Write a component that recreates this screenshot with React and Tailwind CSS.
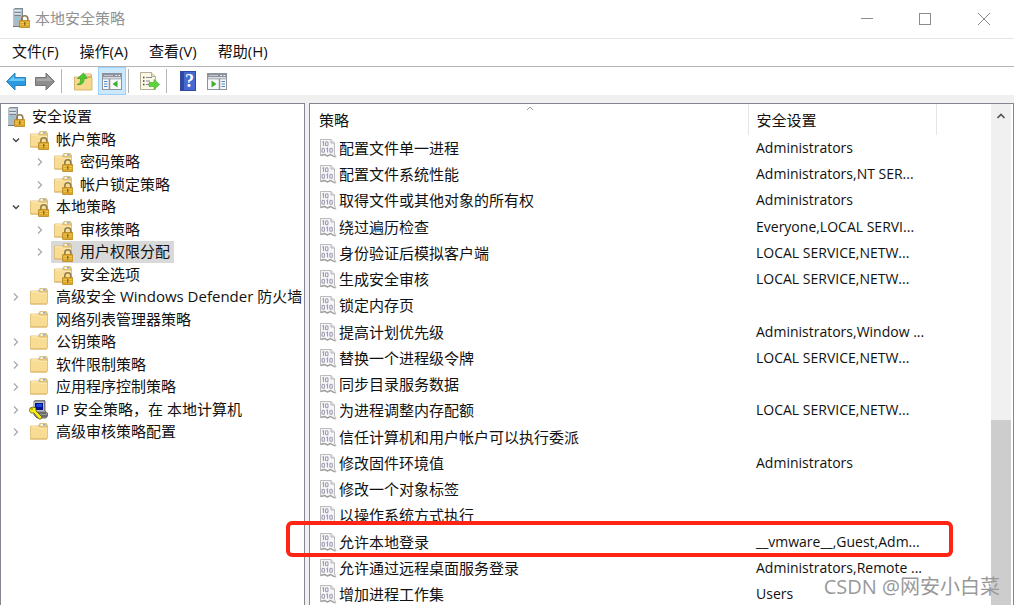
import React, { useState } from 'react';

const treeItems = [
  { id: 'root', label: '安全设置', icon: 'server', level: 0 },
  { id: 'account', label: '帐户策略', icon: 'locked', level: 1, arrow: 'open' },
  { id: 'password', label: '密码策略', icon: 'locked', level: 2, arrow: 'closed' },
  { id: 'lockout', label: '帐户锁定策略', icon: 'locked', level: 2, arrow: 'closed' },
  { id: 'local', label: '本地策略', icon: 'locked', level: 1, arrow: 'open' },
  { id: 'audit', label: '审核策略', icon: 'locked', level: 2, arrow: 'closed' },
  { id: 'rights', label: '用户权限分配', icon: 'locked', level: 2, arrow: 'closed' },
  { id: 'options', label: '安全选项', icon: 'locked', level: 2 },
  { id: 'firewall', label: '高级安全 Windows Defender 防火墙', icon: 'folder', level: 1, arrow: 'closed' },
  { id: 'network', label: '网络列表管理器策略', icon: 'folder', level: 1 },
  { id: 'pki', label: '公钥策略', icon: 'folder', level: 1, arrow: 'closed' },
  { id: 'software', label: '软件限制策略', icon: 'folder', level: 1, arrow: 'closed' },
  { id: 'applocker', label: '应用程序控制策略', icon: 'folder', level: 1, arrow: 'closed' },
  { id: 'ipsec', label: 'IP 安全策略，在 本地计算机', icon: 'computer', level: 1, arrow: 'closed' },
  { id: 'advanced', label: '高级审核策略配置', icon: 'folder', level: 1, arrow: 'closed' },
];

const policies = [
  { name: '配置文件单一进程', setting: 'Administrators' },
  { name: '配置文件系统性能', setting: 'Administrators,NT SER...' },
  { name: '取得文件或其他对象的所有权', setting: 'Administrators' },
  { name: '绕过遍历检查', setting: 'Everyone,LOCAL SERVI...' },
  { name: '身份验证后模拟客户端', setting: 'LOCAL SERVICE,NETW...' },
  { name: '生成安全审核', setting: 'LOCAL SERVICE,NETW...' },
  { name: '锁定内存页', setting: '' },
  { name: '提高计划优先级', setting: 'Administrators,Window ...' },
  { name: '替换一个进程级令牌', setting: 'LOCAL SERVICE,NETW...' },
  { name: '同步目录服务数据', setting: '' },
  { name: '为进程调整内存配额', setting: 'LOCAL SERVICE,NETW...' },
  { name: '信任计算机和用户帐户可以执行委派', setting: '' },
  { name: '修改固件环境值', setting: 'Administrators' },
  { name: '修改一个对象标签', setting: '' },
  { name: '以操作系统方式执行', setting: '' },
  { name: '允许本地登录', setting: '__vmware__,Guest,Adm...' },
  { name: '允许通过远程桌面服务登录', setting: 'Administrators,Remote ...' },
  { name: '增加进程工作集', setting: 'Users' },
];

const menus = ['文件(F)', '操作(A)', '查看(V)', '帮助(H)'];

const indent = { 0: 'pl-1', 1: 'pl-[2px]', 2: 'pl-[26px]' };

const Padlock = () => (
  <g>
    <path d="M11.8 13V10.800a3 3 0 0 1 6 0V13" fill="none" stroke="#8f7c4c" strokeWidth="1.6" />
    <rect x="9.500" y="12.500" width="10.500" height="7" rx="0.5" fill="#dba92c" stroke="#b58422" strokeWidth="0.8" />
    <path d="M10.500 14.500h8.500M10.500 16.500h8.500" stroke="#f1cb58" strokeWidth="0.8" />
    <path d="M14.800 14v3.500" stroke="#80570a" strokeWidth="1.2" />
  </g>
);

const ServerIcon = () => (
  <svg className="w-5 h-5 shrink-0" viewBox="0 0 20 20" aria-hidden="true">
    <path d="M3.500 1l1.500-1h8v17l-1 1H3.500z" fill="#7f8d98" />
    <rect x="3.500" y="1" width="8.500" height="17" fill="#aebbc5" />
    <path d="M4.500 3h6.500M4.500 6h6.500" stroke="#eef4f8" strokeWidth="1.500" />
    <path d="M4.500 4.300h6.500M4.500 7.300h6.500" stroke="#586975" strokeWidth="0.800" />
    <rect x="5" y="10" width="2" height="2" fill="#65d9e8" />
    <path d="M3 18h8v1H3z" fill="#6c7982" />
    <Padlock />
  </svg>
);

const FolderIcon = ({ locked }) => (
  <svg className="w-5 h-5 shrink-0" viewBox="0 0 20 20" aria-hidden="true">
    <path d="M9.500 4l1.300-2.500h6.500l1.200 2V6h-9z" fill="#e8c373" stroke="#cfa960" strokeWidth="0.600" />
    <rect x="11.500" y="2.200" width="5" height="1.500" fill="#fff" />
    <rect x="14" y="2.200" width="2.500" height="1.300" fill="#4fa8e0" />
    <path d="M1.500 4h7.500l1.500 1.300h8v11l-1 .7h-16z" fill="#f8dc93" stroke="#dab970" strokeWidth="0.800" />
    <path d="M2.200 4.900h6.400l1.300 1.300h8" fill="none" stroke="#fdeebf" strokeWidth="1" />
    <path d="M1.500 17h16.500" stroke="#dcb667" strokeWidth="1" />
    {locked && <Padlock />}
  </svg>
);

const ComputerIcon = () => (
  <svg className="w-5 h-5 shrink-0" viewBox="0 0 20 20" aria-hidden="true">
    <path d="M5 1.500L6.500 0H15l1 1v10l2.500 2v3l-1.500 2H8l-3-3z" fill="#969696" stroke="#555" strokeWidth="0.800" />
    <path d="M5 2h10v9H5z" fill="#bcbcbc" />
    <path d="M6 3h8v7H6z" fill="#00108f" />
    <path d="M7.500 4h5.500v3H7.500z" fill="#1646ed" />
    <path d="M9 13h8M10 16h8" stroke="#444" />
    <path d="M1 8l3-1 3 1v3l6 6-1 2h-2l-5-6H2l-1.500-2z" fill="#f8ed15" stroke="#4f4a00" strokeWidth="0.700" />
    <path d="M2 9h2" stroke="#746d00" />
  </svg>
);

const PolicyIcon = () => (
  <svg className="w-[18px] h-5 shrink-0" viewBox="0 0 18 20" aria-hidden="true">
    <path d="M1.500 1.500h10.500l3.500 3.500v11l1.500 3-3.500-1-2-1.500-3 1.500-3-1.500-4 1z" fill="#f6f6f7" stroke="#bcbcbc" />
    <path d="M12 1.500v3.500h3.500" fill="#e4e4e4" stroke="#b5b5b5" />
    <path d="M1.500 17.500l4-1 3 1.500 3-1.500 4.500 2.500" fill="none" stroke="#a2a2a2" strokeWidth="1.400" />
    <g fill="none" stroke="#a09cb8" strokeWidth="1.100">
      <path d="M3.500 4.500l1-.8V8" />
      <rect x="6.500" y="3.800" width="2.500" height="4" rx="1" />
      <rect x="3" y="10.300" width="2.500" height="4" rx="1" />
      <path d="M7.500 11l1-.8v4.300" />
      <rect x="10.800" y="10.300" width="2.500" height="4" rx="1" />
    </g>
  </svg>
);

const TreeIcon = ({ type }) => {
  if (type === 'server') return <ServerIcon />;
  if (type === 'computer') return <ComputerIcon />;
  return <FolderIcon locked={type === 'locked'} />;
};

const Arrow = ({ state }) => (
  <svg className="w-6 h-3 shrink-0" viewBox="0 0 24 12" fill="none" aria-hidden="true">
    {state === 'open' && <path d="M10 4.500l3 3 3-3" stroke="#444" strokeWidth="1.400" />}
    {state === 'closed' && <path d="M11 2.500l3.500 3.500-3.500 3.500" stroke="#a6a6a6" strokeWidth="1.200" />}
  </svg>
);

const ArrowIcon = ({ forward }) => (
  <svg className="w-5 h-5" viewBox="0 0 20 20" aria-hidden="true">
    {forward ? (
      <>
        <path d="M19.500 10.500L11 2v4.500H.500v8H11V19z" fill="#8d8d8d" stroke="#747474" />
        <path d="M1.500 10V7.500H12v-3l5.500 5.500z" fill="#a9a9a9" />
      </>
    ) : (
      <>
        <path d="M.500 10.500L9 2v4.500h10.500v8H9V19z" fill="#2a9be0" stroke="#2f83bd" />
        <path d="M18.500 10V7.500H8v-3L2.500 10z" fill="#68c8f6" />
      </>
    )}
  </svg>
);

const UpFolderIcon = () => (
  <svg className="w-5 h-5" viewBox="0 0 20 20" aria-hidden="true">
    <path d="M11 5l1-2.500h6l1 2V7h-8z" fill="#dbb45b" />
    <rect x="13" y="3.500" width="4.500" height="1.200" fill="#e9f5fd" />
    <path d="M1.500 6h8l1.500.500h8V19H1.500z" fill="#f6d98d" stroke="#cfaa56" strokeWidth="0.800" />
    <path d="M4 13.500c3-.5 4-3 3.500-6H4.500L10.500 2 14 7.500h-3c.5 4-2.500 7-7 6z" fill="#4ccb2e" stroke="#2f9e22" strokeWidth="0.700" />
  </svg>
);

const PaneIcon = ({ right }) => (
  <svg className="w-5 h-5" viewBox="0 0 20 20" aria-hidden="true">
    <rect x="0.500" y="2.500" width="19" height="16" fill="#f7f8fa" stroke="#8d939b" />
    <path d="M1 3h18v3H1z" fill="#8c939d" />
    <path d="M2 4.500h9" stroke="#c3c8cf" />
    <path d="M13.500 4.500h1.500M16.500 4.500h1.500" stroke="#fff" />
    <path d="M1 7.500h18" stroke="#b7bdc5" strokeWidth="2" />
    {right ? (
      <>
        <path d="M12.500 8v10" stroke="#8d939b" strokeWidth="1.500" />
        <path d="M14.500 10.500h3.500M14.500 13h3.500M14.500 15.500h3.500" stroke="#4f86bf" />
        <path d="M4.500 9.500v7l5-3.500z" fill="#3fae2a" />
      </>
    ) : (
      <>
        <path d="M7.500 8v10" stroke="#8d939b" strokeWidth="1.500" />
        <path d="M2 10.500h3.500M2 13h3.500M2 15.500h3.500" stroke="#4f86bf" />
        <path d="M15.500 9.500v7l-5-3.500z" fill="#3fae2a" />
      </>
    )}
  </svg>
);

const ExportIcon = () => (
  <svg className="w-5 h-5" viewBox="0 0 20 20" aria-hidden="true">
    <path d="M.500 1.500h11l4 4v13h-15z" fill="#fcf8e6" stroke="#b3ae9a" />
    <path d="M11.500 1.500v4h4" fill="#e9e1bd" stroke="#b3ae9a" />
    <path d="M3 6.500h1.500M3 10h1.500M3 13.500h1.500" stroke="#444" strokeWidth="1.500" />
    <path d="M6 6.500h6M6 10h4M6 13.500h3" stroke="#8881a0" />
    <path d="M9 11.500h5V8.500l5.500 5-5.500 5v-3H9z" fill="#5ed33f" stroke="#4cb636" strokeWidth="0.700" />
  </svg>
);

const HelpIcon = () => (
  <span className="flex items-center justify-center w-4 h-5 bg-[#4568d2] border border-[#2f479c] border-l-4 text-white text-lg leading-5 font-bold font-['Liberation_Serif',serif]">
    ?
  </span>
);

const ToolButton = ({ label, active, children }) => (
  <button
    type="button"
    aria-label={label}
    className={`flex items-center justify-center w-7 h-7 ${active ? 'bg-[#cce8ff] border border-[#99d1ff]' : ''}`}
  >
    {children}
  </button>
);

const Separator = () => <span className="w-px h-6 ml-px mr-[6px] bg-[#b5b5b5]" />;

const App = () => {
  const [selected, setSelected] = useState('rights');

  return (
    <div className="relative flex flex-col h-screen overflow-hidden bg-white text-[#111] text-[15px] leading-5 font-['Open_Sans','Noto_Sans_CJK_SC',sans-serif]">
      {/* Title bar */}
      <header className="flex items-center h-[38px] shrink-0 pl-[10px] pb-[2px] text-[#929292]">
        <ServerIcon />
        <h1 className="flex-1 ml-[5px]">本地安全策略</h1>
        <div className="flex pt-[2px]">
          <button type="button" aria-label="最小化" className="flex items-center justify-center w-[58px] h-9">
            <svg className="w-3 h-3" viewBox="0 0 12 12"><path d="M0 5.500h12" stroke="#8c8c8c" /></svg>
          </button>
          <button type="button" aria-label="最大化" className="flex items-center justify-center w-[58px] h-9">
            <svg className="w-3 h-3" viewBox="0 0 12 12"><rect x="0.500" y="0.500" width="11" height="11" fill="none" stroke="#8c8c8c" /></svg>
          </button>
          <button type="button" aria-label="关闭" className="flex items-center justify-center w-[60px] h-9">
            <svg className="w-3 h-3" viewBox="0 0 12 12"><path d="M0 0l12 12M12 0L0 12" stroke="#8c8c8c" /></svg>
          </button>
        </div>
      </header>

      {/* Menu */}
      <nav className="flex items-center gap-[21px] h-[29px] shrink-0 px-3 pb-[3px] border-t border-t-[#e5e5e5] border-b border-b-[#b4b4b8]">
        {menus.map((menu) => (
          <button key={menu} type="button" className="text-left">{menu}</button>
        ))}
      </nav>

      {/* Toolbar */}
      <div className="flex items-center gap-px h-7 shrink-0 pl-[2px]">
        <ToolButton label="后退"><ArrowIcon /></ToolButton>
        <ToolButton label="前进"><ArrowIcon forward /></ToolButton>
        <Separator />
        <ToolButton label="上一级"><UpFolderIcon /></ToolButton>
        <ToolButton label="显示/隐藏控制台树" active><PaneIcon /></ToolButton>
        <Separator />
        <ToolButton label="导出列表"><ExportIcon /></ToolButton>
        <Separator />
        <ToolButton label="帮助"><HelpIcon /></ToolButton>
        <ToolButton label="显示/隐藏操作窗格"><PaneIcon right /></ToolButton>
      </div>

      <main className="flex flex-1 min-h-0 gap-1 pt-2 bg-[#f0f0f0]">
        {/* Console tree */}
        <aside className="w-[305px] shrink-0 pt-[2px] overflow-hidden bg-white border border-b-0 border-[#828790]">
          <ul className="[&>li]:h-[22px] [&>li:nth-child(even)]:h-[23px]">
            {treeItems.map((item) => (
              <li key={item.id} className={`flex items-center whitespace-nowrap ${indent[item.level]}`}>
                {item.level > 0 && <Arrow state={item.arrow} />}
                <button
                  type="button"
                  onClick={() => setSelected(item.id)}
                  className={`flex items-center h-full gap-[7px] pr-1 ${item.level > 0 ? 'pl-[2px]' : ''} ${
                    selected === item.id ? 'bg-[#d9d9d9]' : ''
                  }`}
                >
                  <TreeIcon type={item.icon} />
                  <span className="pb-[2px]">{item.label}</span>
                </button>
              </li>
            ))}
          </ul>
        </aside>

        {/* Policy list */}
        <section className="flex flex-1 min-w-0 overflow-hidden bg-white border border-b-0 border-[#828790]">
          <div className="flex-1 min-w-0">
            <table className="w-full table-fixed border-collapse text-left">
              <colgroup>
                <col />
                <col className="w-[188px]" />
                <col className="w-[55px]" />
              </colgroup>
              <thead>
                <tr className="h-[31px]">
                  <th scope="col" className="relative p-0 pl-[9px] pt-px font-normal">
                    策略
                    <svg className="absolute top-0 left-1/2 w-2 h-2 -ml-[3px]" viewBox="0 0 8 8" fill="none">
                      <path d="M1 6l3-3 3 3" stroke="#999" />
                    </svg>
                  </th>
                  <th scope="col" className="p-0 pl-2 pt-px font-normal border-x border-[#e5e5e5]">安全设置</th>
                  <td />
                </tr>
              </thead>
              <tbody className="[&>tr]:h-[26px] [&>tr:nth-child(4n)]:h-[27px]">
                {policies.map((policy) => (
                  <tr key={policy.name}>
                    <td className="p-0 pl-[9px]">
                      <div className="flex items-center gap-[2px] whitespace-nowrap">
                        <PolicyIcon />
                        <span>{policy.name}</span>
                      </div>
                    </td>
                    <td className="p-0 pl-2 text-[14px] whitespace-nowrap">{policy.setting}</td>
                    <td />
                  </tr>
                ))}
              </tbody>
            </table>
          </div>
          <div className="flex flex-col w-5 mr-[2px] shrink-0 bg-[#f0f0f0]">
            <button type="button" aria-label="向上滚动" className="flex items-center justify-center h-6">
              <svg className="w-3 h-3" viewBox="0 0 12 12" fill="none"><path d="M2.500 8L6 4.500 9.500 8" stroke="#505050" strokeWidth="1.600" /></svg>
            </button>
            <div className="flex-1 pt-[292px]">
              <div className="h-full bg-[#cdcdcd]" />
            </div>
          </div>
        </section>
      </main>

      {/* Marker around the local logon policy */}
      <div className="absolute top-[521px] left-[286px] right-[61px] h-9 border-4 border-[#ff2414] rounded-md pointer-events-none" />
      <p className="absolute bottom-1 right-[14px] text-[20px] leading-7 text-[#999] pointer-events-none">CSDN @网安小白菜</p>
    </div>
  );
};

export default App;
